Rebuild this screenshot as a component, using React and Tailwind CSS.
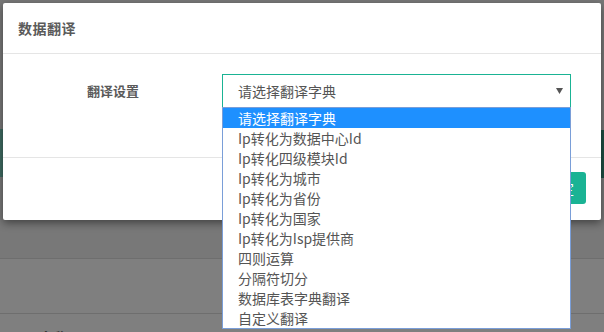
import React from 'react'

const OPTIONS = [
  '请选择翻译字典',
  'Ip转化为数据中心Id',
  'Ip转化四级模块Id',
  'Ip转化为城市',
  'Ip转化为省份',
  'Ip转化为国家',
  'Ip转化为Isp提供商',
  '四则运算',
  '分隔符切分',
  '数据库表字典翻译',
  '自定义翻译',
]

const font = "font-['Microsoft_YaHei','Noto_Sans_CJK_SC',sans-serif]"

export default function App() {
  return (
    <div className={`relative w-[604px] h-[332px] overflow-hidden bg-[#7f7f7f] ${font}`}>
      {/* page behind the overlay */}
      <div className="relative h-[259px] bg-[#787878] border-b border-[#6e6e6e]">
        <div className="absolute left-0 top-[129px] w-[3px] h-[48px] bg-[#3f6b62]" />
        <div className="absolute right-0 top-[130px] w-[3px] h-[48px] bg-[#1d4f44]" />
      </div>
      <div className="h-[55px] border-b border-[#6e6e6e]" />
      <div className="pl-[40px] pt-[16px] text-[14px] leading-none font-bold text-[#2f2f2f]">名称</div>

      {/* modal */}
      <div className="absolute left-[3px] top-[3px] w-[598px] h-[217px] bg-white rounded-[2px] shadow-[0_3px_8px_rgba(0,0,0,0.45)] flex flex-col">
        <div className="h-[51px] shrink-0 border-b border-[#e5e5e5] px-[15px] flex items-center">
          <h4 className="text-[14px] font-bold text-[#5a5a5a] tracking-[0.5px]">数据翻译</h4>
        </div>
        <div className="h-[104px] shrink-0 border-b border-[#e5e5e5] pt-[20px] pl-[84px] flex items-start">
          <label className="w-[135px] h-[34px] flex items-center text-[13px] font-bold text-[#5a5a5a]">翻译设置</label>
          <div className="w-[349px] h-[34px] border border-[#1ab394] pl-[15px] pr-[7px] flex items-center justify-between text-[14px] text-[#555]">
            <span>请选择翻译字典</span>
            <svg width="7" height="6" viewBox="0 0 7 6"><path d="M0 0h7L3.5 6z" fill="#555" /></svg>
          </div>
        </div>
        <div className="flex-1 flex justify-end items-start pt-[14px] pr-[15px]">
          <button className="h-[32px] px-[12px] rounded-[3px] bg-[#1ab394] text-white text-[14px]">确定</button>
        </div>
      </div>

      {/* open select list */}
      <ul className="absolute left-[222px] top-[107px] w-[349px] border border-[#7a9ed8] bg-white text-[14px]">
        {OPTIONS.map((o, i) => (
          <li
            key={o}
            className={`h-[20px] leading-[20px] pl-[15px] ${i === 0 ? 'bg-[#1e90ff] text-white' : 'text-[#555]'}`}
          >
            {o}
          </li>
        ))}
      </ul>
    </div>
  )
}
